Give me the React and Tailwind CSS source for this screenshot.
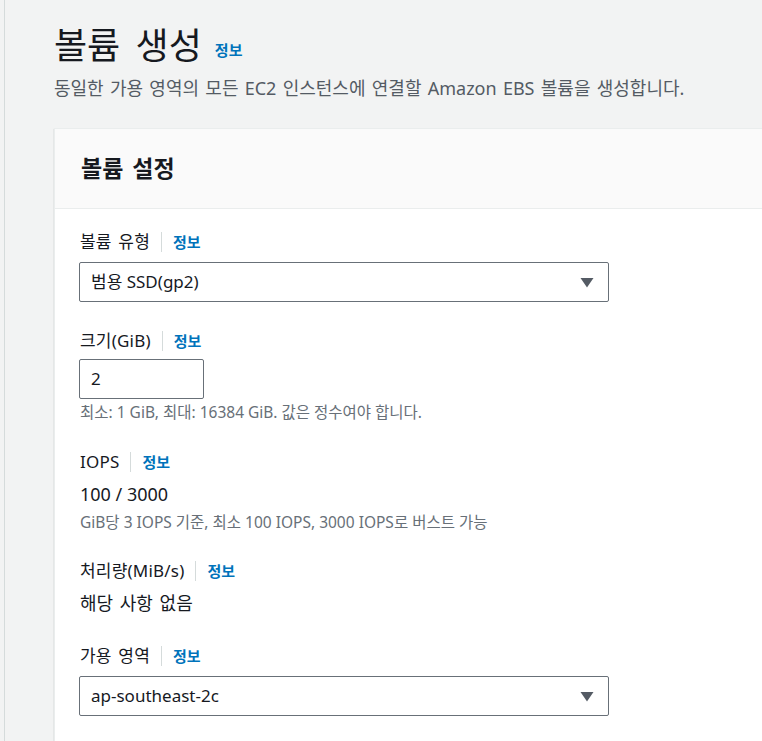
import React from "react";

const font = { fontFamily: '"Noto Sans", "Noto Sans CJK KR", sans-serif' };

const InfoLink = () => (
  <span className="text-[15px] font-bold text-[#0073bb] leading-[22px]">정보</span>
);

const Label = ({ children }) => (
  <div className="flex items-center h-[22px]">
    <span className="text-[17px] text-[#16191f] [word-spacing:2px] tracking-[0.2px]">{children}</span>
    <span className="ml-[11px] mr-[11px] h-[20px] border-l border-[#d5dbdb]" />
    <InfoLink />
  </div>
);

const Caret = () => (
  <svg width="14" height="11" viewBox="0 0 14 11" className="shrink-0">
    <path d="M0.5 1 L13.5 1 L7 10.5 Z" fill="#545b64" />
  </svg>
);

const Select = ({ value }) => (
  <div className="-ml-px flex items-center justify-between w-[530px] h-[40px] border border-[#687078] rounded-[2px] bg-white pl-[11px] pr-[14px]">
    <span className="text-[17px] text-[#16191f]">{value}</span>
    <Caret />
  </div>
);

const Hint = ({ children }) => (
  <div className="text-[15.5px] leading-[18px] text-[#687078]">{children}</div>
);

export default function App() {
  return (
    <div className="flex h-[741px] overflow-hidden bg-[#f2f3f3]" style={font}>
      <div className="w-[4px] shrink-0" />
      <div className="flex-1 border-l border-[#d5dbdb] pl-[49px] pt-[22px]">
        <div className="flex items-end gap-[13px]">
          <h1 className="text-[36px] leading-[48px] text-[#16191f] [word-spacing:6px]">볼륨 생성</h1>
          <span className="text-[15px] font-bold text-[#0073bb] mb-[9px]">정보</span>
        </div>
        <p className="text-[18px] leading-[24px] text-[#545b64] mt-[6px] [word-spacing:1.6px]">
          동일한 가용 영역의 모든 EC2 인스턴스에 연결할 Amazon EBS 볼륨을 생성합니다.
        </p>

        <div className="mt-[28px] w-[800px] bg-white border-l border-t border-[#eaeded] shadow-[0_1px_1px_0_rgba(0,28,36,0.3)]">
          <div className="h-[80px] flex items-center pl-[26px] bg-[#fafafa] border-b border-[#eaeded]">
            <h2 className="text-[23px] font-bold text-[#16191f] [word-spacing:3px]">볼륨 설정</h2>
          </div>

          <div className="pl-[25px] pt-[22px] pb-[40px]">
            <Label>볼륨 유형</Label>
            <div className="mt-[9px]">
              <Select value="범용 SSD(gp2)" />
            </div>

            <div className="mt-[28px]">
              <Label>크기(GiB)</Label>
            </div>
            <div className="-ml-px mt-[7px] w-[125px] h-[40px] border border-[#687078] rounded-[2px] flex items-center pl-[11px] text-[17px] text-[#16191f]">
              2
            </div>
            <div className="mt-[4px]">
              <Hint>최소: 1 GiB, 최대: 16384 GiB. 값은 정수여야 합니다.</Hint>
            </div>

            <div className="mt-[30px]">
              <Label>IOPS</Label>
            </div>
            <div className="mt-[10px] text-[18px] leading-[22px] text-[#16191f]">100 / 3000</div>
            <div className="mt-[8px]">
              <Hint>GiB당 3 IOPS 기준, 최소 100 IOPS, 3000 IOPS로 버스트 가능</Hint>
            </div>

            <div className="mt-[29px]">
              <Label>처리량(MiB/s)</Label>
            </div>
            <div className="mt-[10px] text-[18px] leading-[22px] text-[#16191f] [word-spacing:2px]">해당 사항 없음</div>

            <div className="mt-[31px]">
              <Label>가용 영역</Label>
            </div>
            <div className="mt-[9px]">
              <Select value="ap-southeast-2c" />
            </div>
          </div>
        </div>
      </div>
    </div>
  );
}
